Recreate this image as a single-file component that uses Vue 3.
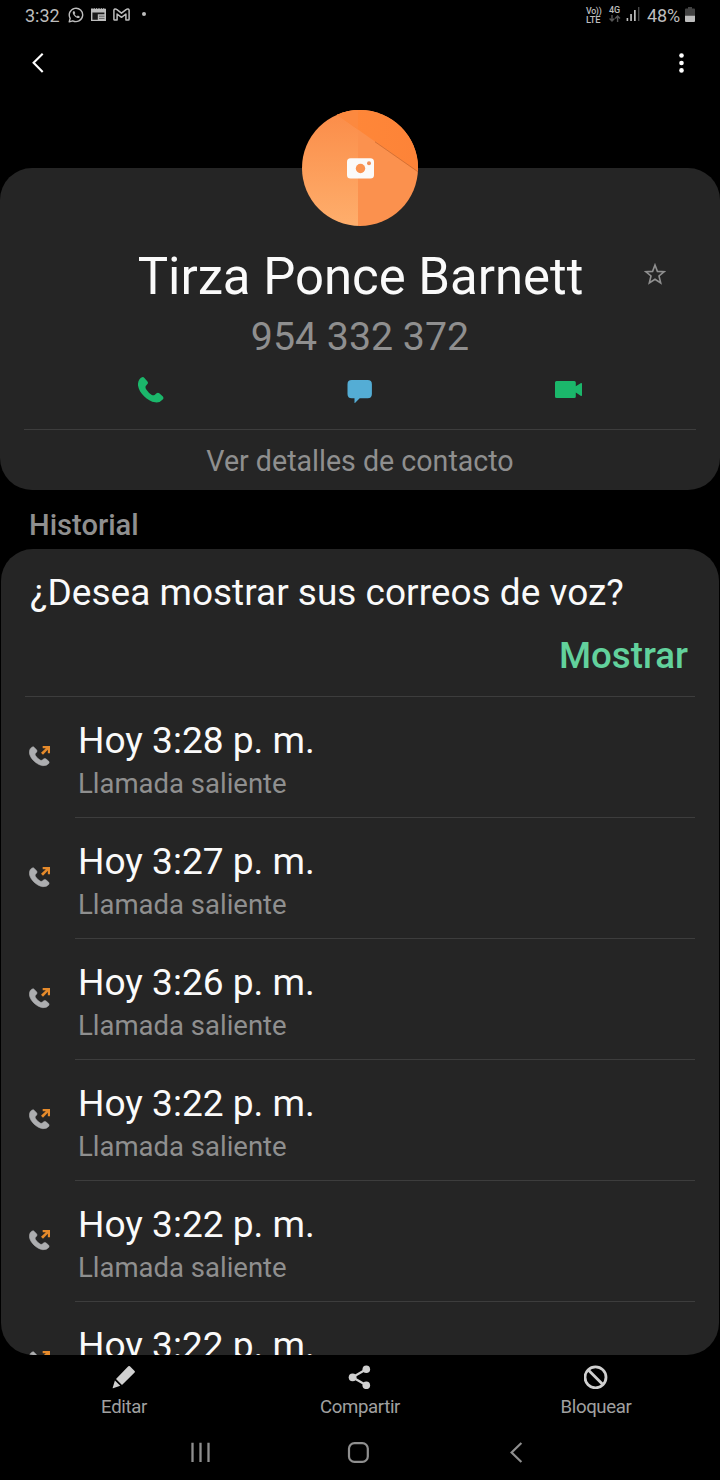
<script setup>
const calls = [
  { time: 'Hoy 3:28 p. m.', kind: 'Llamada saliente' },
  { time: 'Hoy 3:27 p. m.', kind: 'Llamada saliente' },
  { time: 'Hoy 3:26 p. m.', kind: 'Llamada saliente' },
  { time: 'Hoy 3:22 p. m.', kind: 'Llamada saliente' },
  { time: 'Hoy 3:22 p. m.', kind: 'Llamada saliente' },
  { time: 'Hoy 3:22 p. m.', kind: '' },
]
const handset =
  'M14 0Q17 0 19 3L28 13Q31 17 28 21L23 27Q21 31 24 36Q31 47 41 53Q46 55 49 53L55 48Q59 45 63 48L73 57Q77 61 74 66Q65 77 51 75C28 72 3 47 0 25C-1 12 5 2 14 0Z'
</script>

<template>
  <div class="screen">
    <div class="status">
      <span class="clock">3:32</span>
      <svg class="s-whatsapp" width="16" height="16" viewBox="0 0 16 16" fill="none" stroke="#bdbdbd">
        <path d="M1.2 14.9L2.2 11.3A6.7 6.7 0 1 1 4.8 13.8Z" stroke-width="1.4" stroke-linejoin="round" />
        <path d="M5.2 4.2C4.2 5.2 4.8 7.2 6.5 9C8.5 11 10.6 11.6 11.6 10.5L11.7 9.5L9.8 8.6L8.9 9.5C8.1 9.2 6.9 8.1 6.5 7.1L7.3 6.2L6.5 4.2Z" fill="#bdbdbd" stroke="none" />
      </svg>
      <svg class="s-news" width="15" height="14" viewBox="0 0 15 14">
        <path d="M0 1L1 0L2 1L3.2 0L4.4 1L5.6 0L6.8 1L8 0L9.2 1L10.4 0L11.6 1L12.8 0L14 1L15 .5V13H0Z" fill="#bdbdbd" />
        <path d="M1.4 4.6H13.4V6.2H1.4ZM1.4 6.2H6.8V11.8H1.4Z" fill="#1a1a1a" />
        <path d="M8 8.2H13.5M8 10.4H13.5" stroke="#555" stroke-width=".9" />
      </svg>
      <svg class="s-mail" width="17" height="13" viewBox="0 0 17 13" fill="none" stroke="#bdbdbd" stroke-width="1.5" stroke-linejoin="round">
        <path d="M.9 11.3V2.3C.9.8 2.5.5 3.6 1.4L8.5 5.2L13.4 1.4C14.5.5 16.1.8 16.1 2.3V11.3C16.1 12 15.8 12.1 15.2 12.1H12.9V6L8.500 9.300L4.100 6V12.100H1.800C1.200 12.100.9 12 .9 11.300Z" />
      </svg>
      <i class="s-dot"></i>
      <span class="grow"></span>
      <span class="volte"><b>Vo))</b><b class="lte">LTE</b></span>
      <span class="net">
        <b>4G</b>
        <svg width="12" height="7" viewBox="0 0 12 7" fill="none" stroke="#555" stroke-width="1.4">
          <path d="M3 0V5.8M.6 3.4L3 5.9L5.4 3.4M8.6 7V1.2M6.2 3.6L8.6 1.1L11 3.6" />
        </svg>
      </span>
      <svg class="signal" width="14" height="14" viewBox="0 0 14 14">
        <path d="M.6 11H2.2V14H.6ZM4.2 7H5.9V14H4.2ZM8 3H9.7V14H8Z" fill="#bdbdbd" />
        <path d="M12 0H13.4V14H12Z" fill="#484848" />
      </svg>
      <span class="percent">48%</span>
      <svg class="battery" width="10" height="15" viewBox="0 0 10 15">
        <path d="M3 0H7V1.6H9Q10 1.6 10 2.6V9H0V2.6Q0 1.6 1 1.6H3Z" fill="#424242" />
        <path d="M0 8.8H10V14Q10 15 9 15H1Q0 15 0 14Z" fill="#bdbdbd" />
      </svg>
    </div>

    <div class="appbar">
      <svg width="12" height="20" viewBox="0 0 12 20" fill="none" stroke="#fff" stroke-width="2.1">
        <path d="M10.7 .8L1.6 9.8L10.7 19" />
      </svg>
      <svg width="5" height="20" viewBox="0 0 5 20" fill="#fff">
        <circle cx="2.5" cy="2.5" r="2.3" /><circle cx="2.5" cy="10" r="2.3" /><circle cx="2.5" cy="17.4" r="2.3" />
      </svg>
    </div>

    <section class="contact">
      <svg class="avatar" width="116" height="116" viewBox="0 0 116 116">
        <defs>
          <clipPath id="disc"><circle cx="58" cy="58" r="58" /></clipPath>
          <linearGradient id="left" x1="0" y1="0" x2="0" y2="1">
            <stop offset="0" stop-color="#fb8c48" /><stop offset="1" stop-color="#feae6c" />
          </linearGradient>
          <linearGradient id="top" x1="0" y1="0" x2="1" y2="0">
            <stop offset="0" stop-color="#ff8838" /><stop offset="1" stop-color="#fd8338" />
          </linearGradient>
        </defs>
        <g clip-path="url(#disc)">
          <path d="M0 0H56V116H0Z" fill="url(#left)" />
          <path d="M56 0H116V116H56Z" fill="#fb914e" />
          <path d="M28 0H116V62L34 4Z" fill="url(#top)" />
          <path d="M28 0H56V19.6L34 4Z" fill="#fc893f" />
          <path d="M73 31.8L116 61.8" stroke="#b9602c" stroke-width=".6" />
        </g>
        <rect x="45" y="48.2" width="27" height="20.4" rx="3.6" fill="#fbfaf9" />
        <circle cx="58.5" cy="58.5" r="4.7" fill="#fb9350" />
        <circle cx="67" cy="53.3" r="2" fill="#f0915a" />
      </svg>

      <h1>Tirza Ponce Barnett</h1>
      <svg class="star" width="22" height="22" viewBox="0 0 22 22" fill="none" stroke="#8f8f8f" stroke-width="1.6">
        <path d="M11 2L13.4 8.4L20.2 8.7L15 13L16.7 20L11 16.3L5.3 20L7 13L1.8 8.7L8.6 8.4Z" />
      </svg>
      <p class="number">954 332 372</p>

      <div class="actions">
        <svg width="26" height="26" viewBox="0 0 77 77"><path :d="handset" fill="#1bb76b" /></svg>
        <svg width="26" height="26" viewBox="0 0 26 26" fill="#54add5">
          <path d="M4.7 3H20.7Q24.9 3 24.9 7.2V17Q24.9 21.2 20.7 21.2H12.7L7.5 26.5V21.2H4.7Q.5 21.2 .5 17V7.2Q.5 3 4.7 3Z" />
        </svg>
        <svg width="28" height="26" viewBox="0 0 28 26" fill="#1bb76b">
          <path d="M1.5 4H19.3Q20.8 4 20.8 5.5V9.3L25.6 6.2Q27 5.6 27 6.8V18.2Q27 19.4 25.6 18.8L20.8 15.4V19.5Q20.8 21 19.3 21H1.5Q0 21 0 19.5V5.5Q0 4 1.5 4Z" />
        </svg>
      </div>
      <div class="details">Ver detalles de contacto</div>
    </section>

    <h2>Historial</h2>

    <section class="history">
      <div class="prompt">
        <p>¿Desea mostrar sus correos de voz?</p>
        <strong>Mostrar</strong>
      </div>
      <div v-for="(call, i) in calls" :key="i" class="call">
        <svg width="22" height="21" viewBox="0 0 66 63">
          <g transform="translate(1 2) scale(.79 .76)"><path :d="handset" fill="#adaeb0" stroke="#adaeb0" stroke-width="2" /></g>
          <path d="M41 0H63V22H56.5V11.5L42 26L36 20L50.5 6.5H41Z" fill="#e58a2b" />
        </svg>
        <div class="call-text">
          <p class="time">{{ call.time }}</p>
          <p v-if="call.kind" class="kind">{{ call.kind }}</p>
        </div>
      </div>
    </section>

    <div class="toolbar">
      <div class="tool">
        <svg width="24" height="24" viewBox="0 0 24 24" fill="#d0d0d0">
          <path d="M16.3 1.3Q17.1 .5 17.9 1.3L22.6 5.9Q23.4 6.7 22.6 7.5L10 20L4 13.9ZM2.9 15.4L8.3 20.8L1 23.3Q.5 23.4 .7 22.8Z" />
        </svg>
        <span>Editar</span>
      </div>
      <div class="tool">
        <svg width="24" height="24" viewBox="0 0 24 24" fill="#d0d0d0">
          <path d="M18.3 4.2L4.5 12.3L18.3 20.3" fill="none" stroke="#d0d0d0" stroke-width="2.2" />
          <circle cx="4.6" cy="12.3" r="3.9" /><circle cx="18.3" cy="4.3" r="3.8" /><circle cx="18.3" cy="20.3" r="3.8" />
        </svg>
        <span>Compartir</span>
      </div>
      <div class="tool">
        <svg width="24" height="24" viewBox="0 0 24 24" fill="none" stroke="#d0d0d0" stroke-width="2.8">
          <circle cx="11.5" cy="12.3" r="10.5" /><path d="M4.3 5L18.8 19.6" />
        </svg>
        <span>Bloquear</span>
      </div>
    </div>

    <div class="nav">
      <svg width="22" height="22" viewBox="0 0 22 22" stroke="#8f8f8f" stroke-width="2.3">
        <path d="M3.5 .7V20.1M11.5 .7V20.1M19.5 .7V20.1" />
      </svg>
      <svg width="22" height="22" viewBox="0 0 22 22" fill="none" stroke="#8f8f8f" stroke-width="2.2">
        <rect x="2" y="1.1" width="18.8" height="18.8" rx="5.5" />
      </svg>
      <svg width="22" height="22" viewBox="0 0 22 22" fill="none" stroke="#8f8f8f" stroke-width="2.2">
        <path d="M16.4 1L6.6 10.5L16.4 20" />
      </svg>
    </div>
  </div>
</template>

<style>
body {
  background: #000;
}
</style>

<style scoped>
.screen {
  width: 720px;
  height: 1480px;
  overflow: hidden;
  background: #000;
  font-family: Roboto, "Liberation Sans", sans-serif;
  color: #fafafa;
}
svg {
  display: block;
  flex: none;
}
p,
h1,
h2 {
  margin: 0;
  font-weight: 400;
}
.status {
  display: flex;
  align-items: flex-start;
  height: 31px;
  padding: 0 25px;
  color: #bdbdbd;
}
.clock,
.percent {
  font-size: 18px;
  line-height: 32px;
}
.clock {
  width: 35px;
}
.percent {
  width: 33px;
  letter-spacing: -0.15px;
}
.s-whatsapp {
  margin: 7px 0 0 8px;
}
.s-news {
  margin: 8px 0 0 7px;
}
.s-mail {
  margin: 8px 0 0 7px;
}
.s-dot {
  width: 4px;
  height: 4px;
  margin: 12px 0 0 12px;
  border-radius: 50%;
  background: #bdbdbd;
}
.grow {
  flex: 1;
}
.volte,
.net {
  display: flex;
  flex-direction: column;
}
.volte {
  width: 15px;
  margin: 7px 8px 0 0;
  font-size: 8.8px;
  line-height: 8px;
  letter-spacing: -0.3px;
}
.volte b,
.net b {
  font-weight: 500;
}
.volte .lte {
  font-size: 9.3px;
  line-height: 9px;
  letter-spacing: -0.1px;
}
.net {
  width: 12px;
  margin: 6px 5px 0 0;
  font-size: 9px;
  line-height: 9px;
}
.signal {
  margin: 7px 7px 0 0;
}
.battery {
  margin: 7px 0 0 5px;
}
.appbar {
  display: flex;
  justify-content: space-between;
  align-items: center;
  height: 63px;
  padding: 0 36px 0 32px;
}
.contact {
  position: relative;
  box-sizing: border-box;
  height: 322px;
  margin-top: 74px;
  padding-top: 79px;
  border-radius: 32px;
  background: #252525;
  text-align: center;
}
.avatar {
  position: absolute;
  top: -58px;
  left: 302px;
}
.star {
  position: absolute;
  top: 95px;
  left: 644px;
}
h1 {
  padding-left: 1px;
  font-size: 50.9px;
  line-height: 60px;
}
.number {
  margin-top: 6px;
  font-size: 39.3px;
  line-height: 48px;
  color: #8f8f8f;
}
.actions {
  display: grid;
  grid-template-columns: repeat(3, 209px);
  place-content: center;
  place-items: center;
  height: 58px;
  margin: 0 1px 10px 0;
}
.details {
  margin: 0 24px;
  border-top: 1px solid #3d3d3d;
  font-size: 28.6px;
  line-height: 62px;
  color: #8f8f8f;
}
h2 {
  box-sizing: border-box;
  height: 59px;
  padding: 12px 0 0 29px;
  font-size: 29.1px;
  font-weight: 500;
  line-height: 46px;
  color: #8f8f8f;
}
.history {
  box-sizing: border-box;
  height: 806px;
  margin: 0 1px;
  overflow: hidden;
  border-radius: 32px;
  background: #252525;
}
.prompt {
  display: flex;
  flex-direction: column;
  box-sizing: border-box;
  height: 148px;
  margin: 0 24px;
  padding: 20px 7px 0 5px;
  border-bottom: 1px solid #3d3d3d;
  font-size: 37px;
  line-height: 48px;
}
.prompt strong {
  align-self: flex-end;
  margin-top: 15px;
  font-size: 36.7px;
  font-weight: 500;
  color: #62d19c;
}
.call {
  display: flex;
  height: 121px;
  padding: 0 24px 0 28px;
}
.call svg {
  margin-top: 49px;
}
.call-text {
  flex: 1;
  box-sizing: border-box;
  height: 121px;
  margin-left: 24px;
  padding: 22px 0 0 3px;
  border-bottom: 1px solid #3d3d3d;
}
.time {
  font-size: 37.1px;
  line-height: 44px;
}
.kind {
  margin-top: 3px;
  font-size: 27.5px;
  line-height: 36px;
  color: #8f8f8f;
}
.toolbar {
  display: grid;
  grid-template-columns: repeat(3, 236px);
  justify-content: center;
  height: 75px;
}
.tool {
  display: flex;
  flex-direction: column;
  align-items: center;
  padding-top: 10px;
}
.tool span {
  margin-top: 5px;
  font-size: 18.6px;
  line-height: 26px;
  letter-spacing: -0.35px;
  color: #a0a0a0;
}
.nav {
  display: grid;
  grid-template-columns: repeat(3, 158px);
  place-items: center;
  width: 474px;
  height: 46px;
  margin-left: 121px;
}
</style>
